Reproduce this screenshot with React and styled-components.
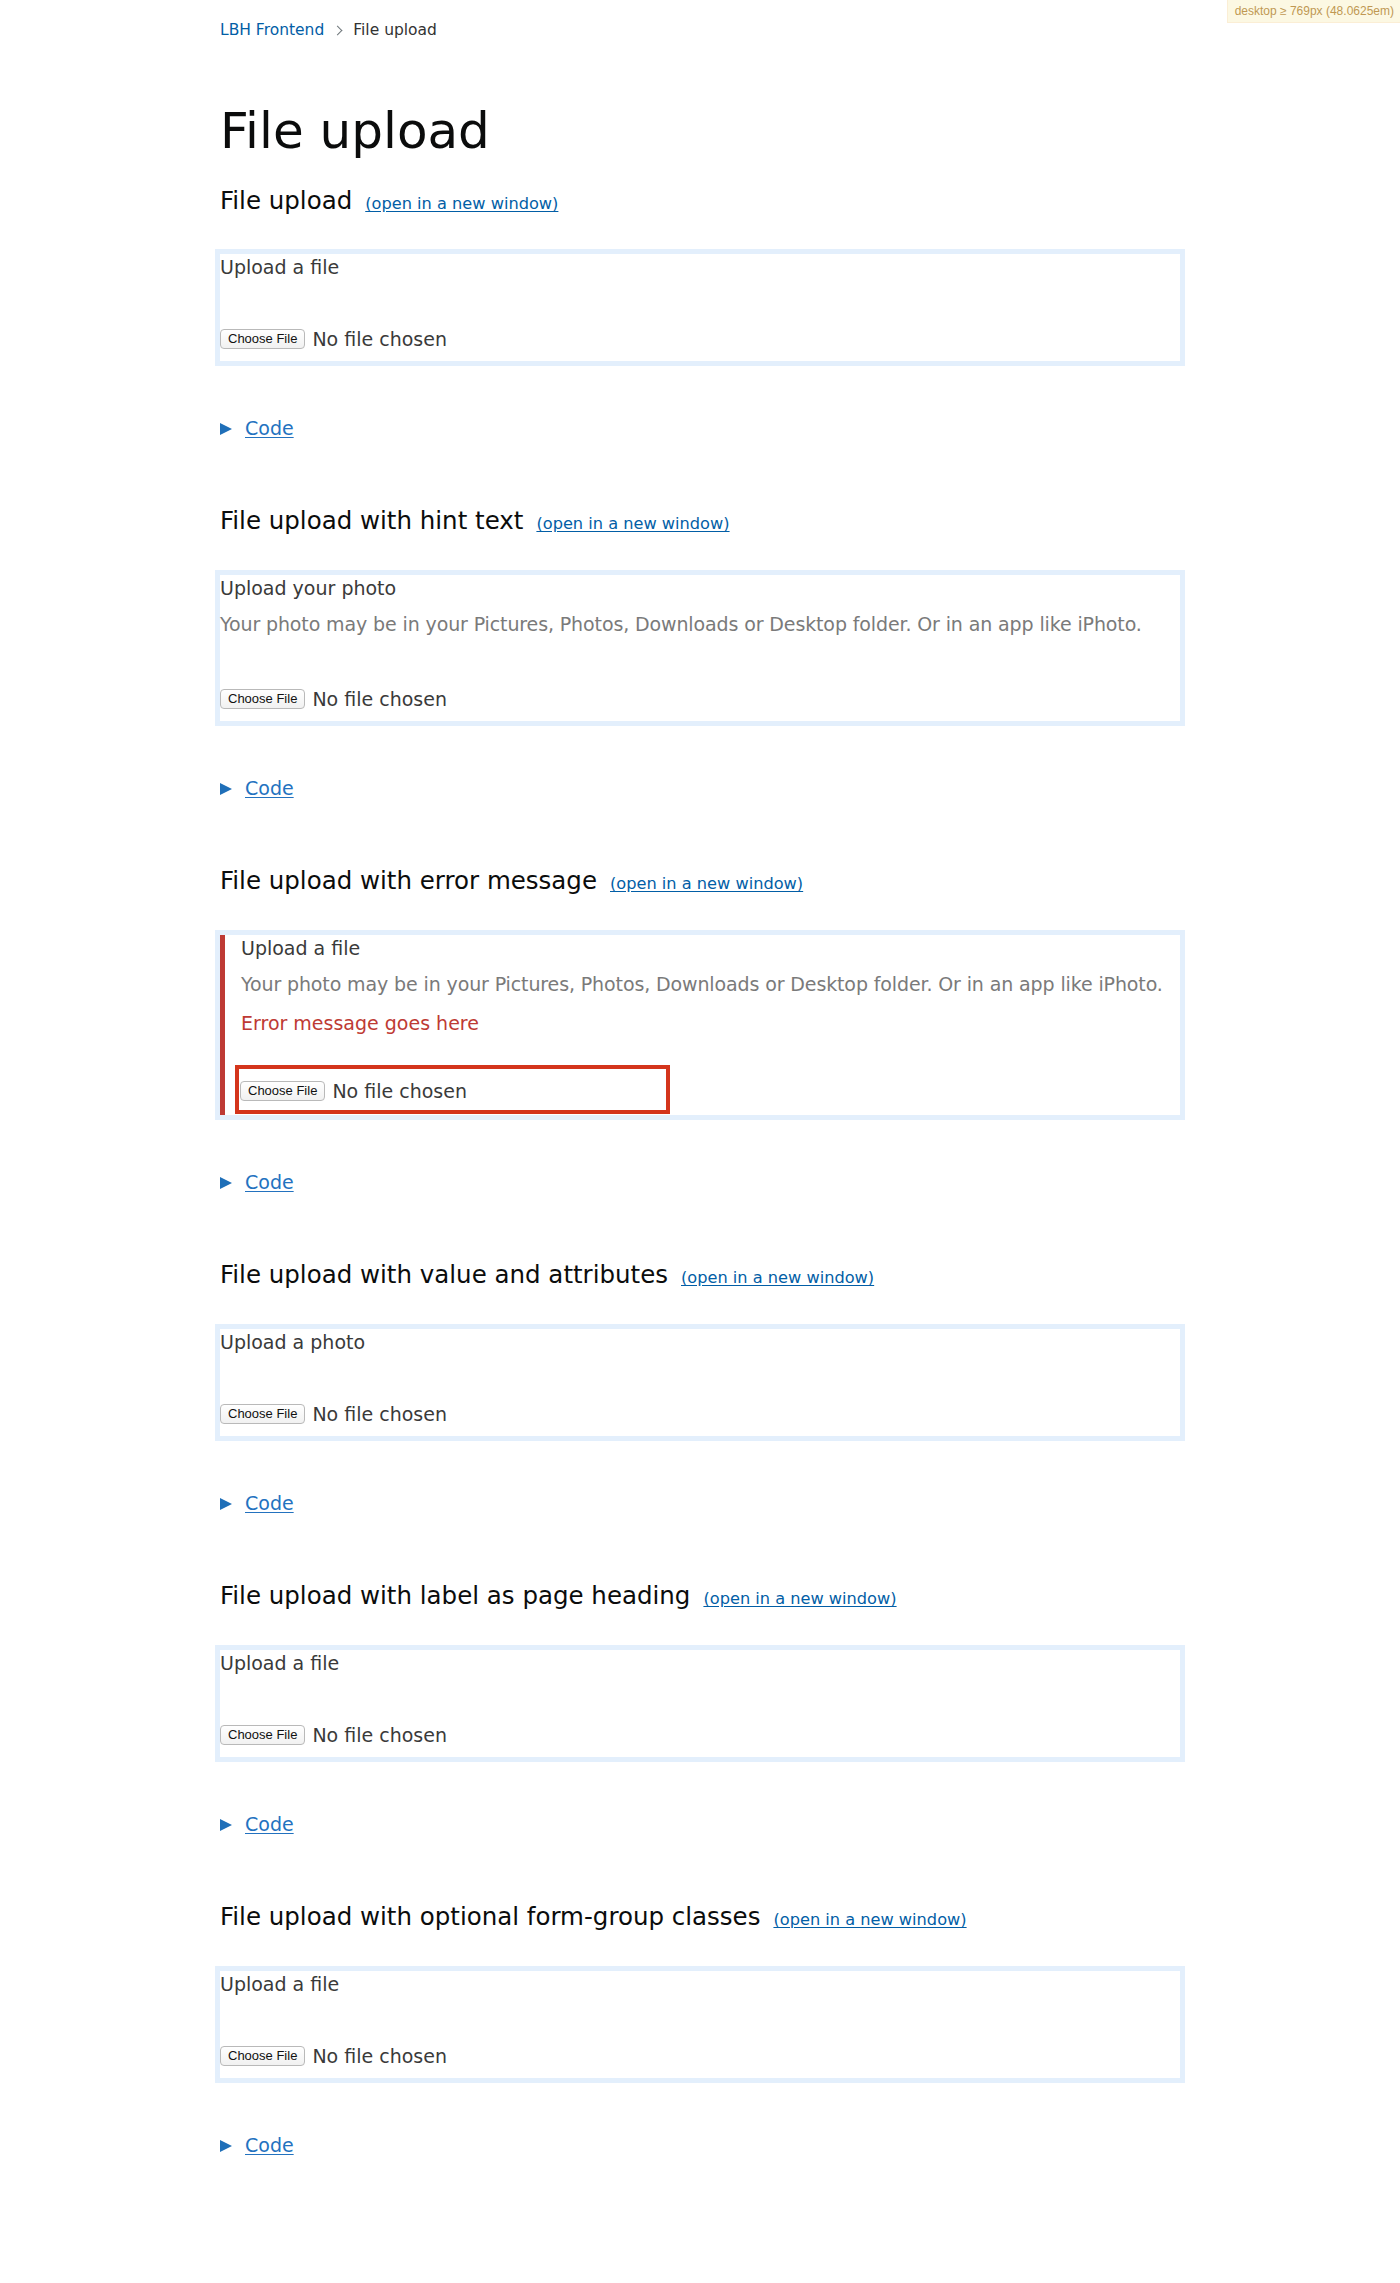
import React from "react";
import styled, { createGlobalStyle } from "styled-components";

const GlobalStyle = createGlobalStyle`
  html, body {
    margin: 0;
    padding: 0;
    background: #fff;
  }
  body {
    font-family: "DejaVu Sans", "Liberation Sans", sans-serif;
    color: #0b0c0c;
  }
`;

const examples = [
  { title: "File upload", label: "Upload a file" },
  {
    title: "File upload with hint text",
    label: "Upload your photo",
    hint: true,
  },
  {
    title: "File upload with error message",
    label: "Upload a file",
    hint: true,
    error: "Error message goes here",
  },
  { title: "File upload with value and attributes", label: "Upload a photo" },
  { title: "File upload with label as page heading", label: "Upload a file" },
  {
    title: "File upload with optional form-group classes",
    label: "Upload a file",
  },
];

const HINT =
  "Your photo may be in your Pictures, Photos, Downloads or Desktop folder. Or in an app like iPhoto.";

const App = () => {
  return (
    <>
      <GlobalStyle />
      <MqBadge>desktop ≥ 769px (48.0625em)</MqBadge>
      <Page>
        <Breadcrumbs>
          <Crumb href="#">LBH Frontend</Crumb>
          <Chevron />
          <CurrentCrumb>File upload</CurrentCrumb>
        </Breadcrumbs>
        <PageTitle>File upload</PageTitle>
        {examples.map((ex, i) => (
          <Section key={i} $first={i === 0}>
            <SectionHeading>
              {ex.title}
              <NewWindowLink href="#">(open in a new window)</NewWindowLink>
            </SectionHeading>
            <ExampleFrame $first={i === 0}>
              <FormGroup $error={!!ex.error}>
                <Label>{ex.label}</Label>
                {ex.hint && <Hint>{HINT}</Hint>}
                {ex.error && <ErrorMessage>{ex.error}</ErrorMessage>}
                <FileField $error={!!ex.error} $hint={!!ex.hint}>
                  <FileButton type="button">Choose File</FileButton>
                  <FileStatus>No file chosen</FileStatus>
                </FileField>
              </FormGroup>
            </ExampleFrame>
            <CodeToggle>
              <Triangle />
              <CodeLink href="#">Code</CodeLink>
            </CodeToggle>
          </Section>
        ))}
      </Page>
    </>
  );
};

export default App;

const MqBadge = styled.div`
  position: fixed;
  top: 0;
  right: 0;
  z-index: 100;
  padding: 4px 6px 4px 7px;
  background: #fcf8e3;
  border-left: 1px solid #fbeed5;
  border-bottom: 1px solid #fbeed5;
  color: #c09853;
  font-family: "Liberation Sans", Arial, sans-serif;
  font-size: 12px;
  line-height: 14px;
`;

const Page = styled.main`
  max-width: 960px;
  margin: 0 auto;
  padding: 20px 0 120px;
`;

const Breadcrumbs = styled.nav`
  display: flex;
  align-items: center;
  height: 20px;
  font-size: 15.5px;
  line-height: 20px;
`;

const Crumb = styled.a`
  color: #025ea6;
  text-decoration: none;
`;

const Chevron = styled.span`
  display: inline-block;
  width: 6px;
  height: 6px;
  margin: 0 12px 0 10px;
  border-top: 1px solid #6f777b;
  border-right: 1px solid #6f777b;
  transform: rotate(45deg);
`;

const CurrentCrumb = styled.span`
  color: #333;
`;

const PageTitle = styled.h1`
  margin: 63px 0 0;
  font-size: 50px;
  font-weight: 400;
  line-height: 56px;
  color: #0b0c0c;
`;

const Section = styled.section`
  margin-top: ${(p) => (p.$first ? "27px" : "65px")};
`;

const SectionHeading = styled.h2`
  display: flex;
  align-items: baseline;
  margin: 0;
  font-size: 24.5px;
  font-weight: 400;
  line-height: 30px;
  color: #0b0c0c;
`;

const NewWindowLink = styled.a`
  margin-left: 13px;
  font-size: 16.2px;
  color: #025ea6;
  text-decoration: underline;
  text-underline-offset: 2px;
`;

const ExampleFrame = styled.div`
  margin: ${(p) => (p.$first ? "30px" : "31px")} -5px 0;
  border: 5px solid #e3effc;
`;

const FormGroup = styled.div`
  padding: 1px 0 ${(p) => (p.$error ? "1px" : "9px")}
    ${(p) => (p.$error ? "16px" : "0")};
  border-left: ${(p) => (p.$error ? "5px solid #be3a34" : "none")};
  font-size: 19px;
  line-height: 25px;
`;

const Label = styled.div`
  color: #3a3a3a;
`;

const Hint = styled.div`
  margin-top: 11px;
  color: #7a7a7a;
  letter-spacing: -0.12px;
`;

const ErrorMessage = styled.div`
  margin-top: 14px;
  color: #be3a34;
`;

const FileField = styled.div`
  display: flex;
  align-items: center;
  gap: 7px;
  height: 26px;
  margin-top: ${(p) => (p.$error ? "29px" : p.$hint ? "49px" : "46px")};
  ${(p) =>
    p.$error &&
    `
    width: 425px;
    margin-left: -6px;
    padding: 9px 1px 6px;
    border: 4px solid #d4351c;
  `}
`;

const FileButton = styled.button`
  height: 20px;
  padding: 0 7px;
  border: 1px solid #b9b9b9;
  border-radius: 4px;
  background: linear-gradient(#ffffff, #f1f1f1);
  color: #111;
  font-family: "Liberation Sans", Arial, sans-serif;
  font-size: 13px;
  line-height: 18px;
`;

const FileStatus = styled.span`
  color: #3a3a3a;
`;

const CodeToggle = styled.div`
  display: flex;
  align-items: center;
  gap: 13px;
  margin-top: 50px;
  font-size: 19px;
  line-height: 25px;
`;

const Triangle = styled.span`
  width: 0;
  height: 0;
  border-top: 6px solid transparent;
  border-bottom: 6px solid transparent;
  border-left: 12px solid #1f6fb8;
`;

const CodeLink = styled.a`
  color: #2372bf;
  text-decoration: underline;
  text-underline-offset: 2px;
`;
